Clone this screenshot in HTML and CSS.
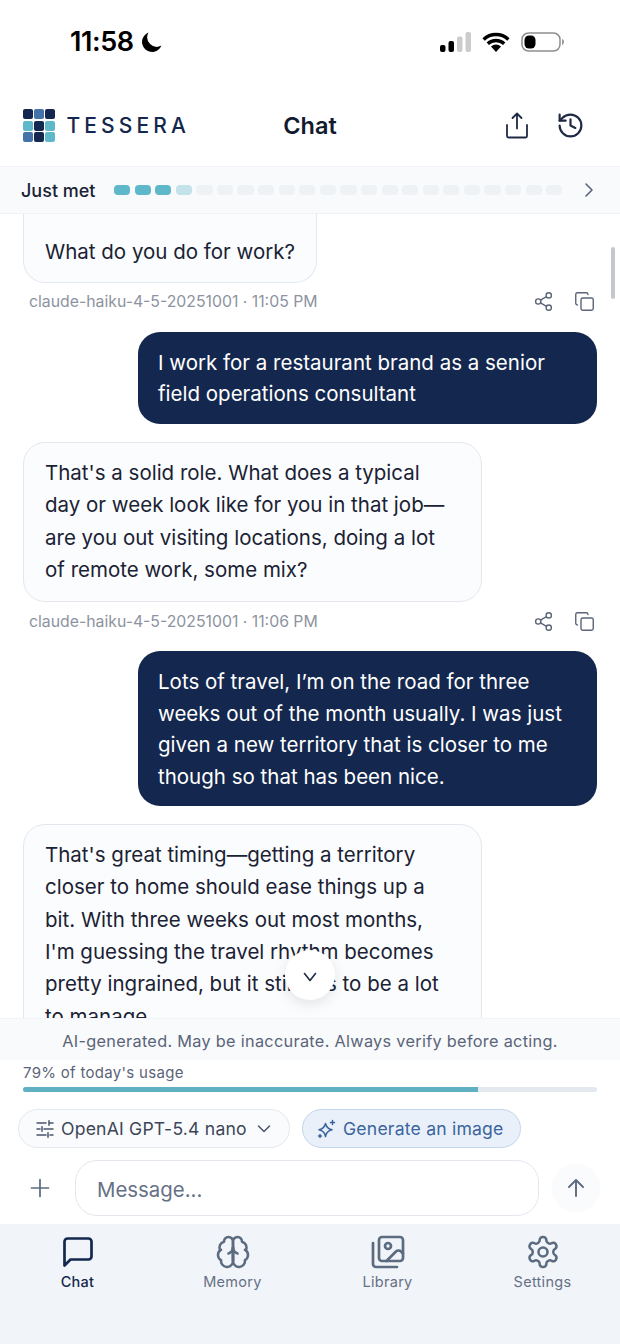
FILE: index.html
```html
<!DOCTYPE html>
<html lang="en">

<head>
    <meta charset="UTF-8">
    <meta name="viewport" content="width=device-width, initial-scale=1.0">
    <title>Chat - Tessera</title>
    <link rel="stylesheet" href="styles.css">
</head>

<body>
    <div class="app">
        <div class="status-bar">
            <div class="status-time">
                <span>11:58</span>
                <svg width="21" height="21" viewBox="0 0 21 21"><path d="M7.500.6a10 10 0 1 0 12.900 12.900A9.500 9.500 0 0 1 7.500.6z" fill="#000"/></svg>
            </div>
            <div class="status-icons">
                <svg width="31" height="20" viewBox="0 0 31 20">
                    <rect x="0" y="13" width="5.500" height="7" rx="2" fill="#000"/>
                    <rect x="8.500" y="9" width="5.500" height="11" rx="2" fill="#000"/>
                    <rect x="17" y="4.500" width="5.500" height="15.500" rx="2" fill="#ccc"/>
                    <rect x="25.500" y="0" width="5.500" height="20" rx="2" fill="#ccc"/>
                </svg>
                <svg width="28" height="20" viewBox="0 0 28 20">
                    <path d="M1.600 7.500a18 18 0 0 1 24.800 0M5.800 11.800a12 12 0 0 1 16.400 0" fill="none" stroke="#000" stroke-width="3.400"/>
                    <path d="M9 14.500a7.500 7.500 0 0 1 10 0L14 20z" fill="#000"/>
                </svg>
                <svg width="44" height="20" viewBox="0 0 44 20">
                    <rect x="1" y="1" width="38" height="18" rx="6.500" fill="none" stroke="#8e8e8e" stroke-width="1.500"/>
                    <rect x="3.500" y="3.500" width="11" height="13" rx="4.500" fill="#000"/>
                    <path d="M41 7c1.500.4 2 1.600 2 3s-.5 2.600-2 3z" fill="#999"/>
                </svg>
            </div>
        </div>

        <header class="top-bar">
            <div class="brand">
                <div class="brand-grid">
                    <span class="navy"></span><span class="blue"></span><span class="navy"></span>
                    <span class="teal"></span><span class="navy"></span><span class="teal"></span>
                    <span class="blue"></span><span class="navy"></span><span class="teal"></span>
                </div>
                <span class="brand-name">TESSERA</span>
            </div>
            <h1 class="page-title">Chat</h1>
            <div class="top-actions">
                <svg width="28" height="28" viewBox="0 0 28 28" fill="none" stroke="#1e2a44" stroke-width="1.800" stroke-linecap="round" stroke-linejoin="round">
                    <path d="M14 16.500V1.500M9.500 6L14 1.500 18.500 6"/>
                    <path d="M4 13v11a1.500 1.500 0 0 0 1.500 1.500h17a1.500 1.500 0 0 0 1.500-1.500V13"/>
                </svg>
                <svg width="29" height="29" viewBox="0 0 24 24" fill="none" stroke="#1e2a44" stroke-width="1.800" stroke-linecap="round" stroke-linejoin="round">
                    <path d="M3 12a9 9 0 1 0 9-9 9.750 9.750 0 0 0-6.740 2.740L3 8"/>
                    <path d="M3 3v5h5"/>
                    <path d="M12 7v5l4 2"/>
                </svg>
            </div>
        </header>

        <div class="rapport">
            <span class="rapport-label">Just met</span>
            <div class="rapport-steps" id="rapportSteps"></div>
            <svg width="12" height="16" viewBox="0 0 12 16" fill="none" stroke="#5b6478" stroke-width="1.600" stroke-linecap="round" stroke-linejoin="round"><path d="M3 2l6 6-6 6"/></svg>
        </div>

        <main class="chat">
            <div class="bubble bot clipped">What do you do for work?</div>
            <div class="meta">
                <span>claude-haiku-4-5-20251001 · 11:05 PM</span>
                <div class="meta-icons">
                    <svg width="21" height="21" viewBox="0 0 24 24" fill="none" stroke="#5b6478" stroke-width="1.600" stroke-linecap="round"><circle cx="18" cy="5" r="3"/><circle cx="6" cy="12" r="3"/><circle cx="18" cy="19" r="3"/><path d="M8.590 13.510l6.830 3.980M15.410 6.510l-6.820 3.980"/></svg>
                    <svg width="21" height="21" viewBox="0 0 24 24" fill="none" stroke="#5b6478" stroke-width="1.600" stroke-linecap="round"><rect x="8" y="8" width="14" height="14" rx="2"/><path d="M4 16c-1.100 0-2-.9-2-2V4c0-1.100.9-2 2-2h10c1.100 0 2 .9 2 2"/></svg>
                </div>
            </div>

            <div class="bubble user">I work for a restaurant brand as a senior field operations consultant</div>

            <div class="bubble bot">That's a solid role. What does a typical day or week look like for you in that job—are you out visiting locations, doing a lot of remote work, some mix?</div>
            <div class="meta">
                <span>claude-haiku-4-5-20251001 · 11:06 PM</span>
                <div class="meta-icons">
                    <svg width="21" height="21" viewBox="0 0 24 24" fill="none" stroke="#5b6478" stroke-width="1.600" stroke-linecap="round"><circle cx="18" cy="5" r="3"/><circle cx="6" cy="12" r="3"/><circle cx="18" cy="19" r="3"/><path d="M8.590 13.510l6.830 3.980M15.410 6.510l-6.820 3.980"/></svg>
                    <svg width="21" height="21" viewBox="0 0 24 24" fill="none" stroke="#5b6478" stroke-width="1.600" stroke-linecap="round"><rect x="8" y="8" width="14" height="14" rx="2"/><path d="M4 16c-1.100 0-2-.9-2-2V4c0-1.100.9-2 2-2h10c1.100 0 2 .9 2 2"/></svg>
                </div>
            </div>

            <div class="bubble user">Lots of travel, I’m on the road for three weeks out of the month usually. I was just given a new territory that is closer to me though so that has been nice.</div>

            <div class="bubble bot">That's great timing—getting a territory closer to home should ease things up a bit. With three weeks out most months, I'm guessing the travel rhythm becomes pretty ingrained, but it still has to be a lot to manage.</div>

            <div class="scroll-thumb"></div>
            <button class="scroll-down">
                <svg width="14" height="10" viewBox="0 0 14 10" fill="none" stroke="#1e2a44" stroke-width="1.600" stroke-linecap="round" stroke-linejoin="round"><path d="M1.500 1.500L7 8.500l5.500-7"/></svg>
            </button>
        </main>

        <div class="disclaimer">AI-generated. May be inaccurate. Always verify before acting.</div>

        <div class="composer">
            <div class="usage-label">79% of today's usage</div>
            <div class="usage-track"><div class="usage-fill"></div></div>

            <div class="pills">
                <div class="pill model">
                    <svg width="20" height="20" viewBox="0 0 20 20" fill="none" stroke="#4b5568" stroke-width="1.500" stroke-linecap="round"><path d="M2 4h9M15 4h3M14 1.800v4.400M2 10h3M9 10h9M7 7.800v4.400M2 16h9M15 16h3M13 13.800v4.400"/></svg>
                    <span>OpenAI GPT-5.4 nano</span>
                    <svg width="14" height="10" viewBox="0 0 14 10" fill="none" stroke="#4b5568" stroke-width="1.500" stroke-linecap="round" stroke-linejoin="round"><path d="M1.500 2l5.500 5.500L12.500 2"/></svg>
                </div>
                <div class="pill generate">
                    <svg width="20" height="20" viewBox="0 0 20 20" fill="none" stroke="#3a659c" stroke-width="1.500" stroke-linejoin="round"><path d="M8.500 4.500c.8 4 2.300 5.500 6.500 6.300-4.200.8-5.700 2.400-6.500 6.700-.8-4.300-2.300-5.900-6.500-6.700 4.200-.8 5.700-2.300 6.500-6.300z"/><path d="M15.500 1.500v4M13.500 3.500h4M3 15.500v3M1.500 17h3" stroke-linecap="round"/></svg>
                    <span>Generate an image</span>
                </div>
            </div>

            <div class="input-row">
                <svg class="plus" width="20" height="20" viewBox="0 0 20 20" fill="none" stroke="#5b6b80" stroke-width="1.700" stroke-linecap="round"><path d="M10 1.500v17M1.500 10h17"/></svg>
                <div class="message-box">Message...</div>
                <div class="send">
                    <svg width="20" height="20" viewBox="0 0 20 20" fill="none" stroke="#5b6b80" stroke-width="1.900" stroke-linecap="round" stroke-linejoin="round"><path d="M10 18V2M3 9l7-7 7 7"/></svg>
                </div>
            </div>
        </div>

        <nav class="tabs">
            <div class="tab active">
                <svg width="36" height="36" viewBox="0 0 24 24" fill="none" stroke="#14274e" stroke-width="1.800" stroke-linejoin="round"><path d="M21 15a2 2 0 0 1-2 2H7l-4 4V5a2 2 0 0 1 2-2h14a2 2 0 0 1 2 2z"/></svg>
                <span>Chat</span>
            </div>
            <div class="tab">
                <svg width="36" height="36" viewBox="0 0 24 24" fill="none" stroke="#5b6b80" stroke-width="1.700" stroke-linecap="round" stroke-linejoin="round">
                    <path d="M12 5a3 3 0 1 0-5.997.125 4 4 0 0 0-2.526 5.770 4 4 0 0 0 .556 6.588A4 4 0 1 0 12 18Z"/>
                    <path d="M12 5a3 3 0 1 1 5.997.125 4 4 0 0 1 2.526 5.770 4 4 0 0 1-.556 6.588A4 4 0 1 1 12 18Z"/>
                    <path d="M15 13a4.500 4.500 0 0 1-3-4 4.500 4.500 0 0 1-3 4"/>
                    <path d="M12 9v9"/>
                    <path d="M3.477 10.896a4 4 0 0 1 .585-.396"/>
                    <path d="M19.938 10.500a4 4 0 0 1 .585.396"/>
                </svg>
                <span>Memory</span>
            </div>
            <div class="tab">
                <svg width="36" height="36" viewBox="0 0 24 24" fill="none" stroke="#5b6b80" stroke-width="1.800" stroke-linecap="round" stroke-linejoin="round">
                    <path d="M18 22H4a2 2 0 0 1-2-2V6"/>
                    <path d="M22 13l-1.296-1.296a2.410 2.410 0 0 0-3.408 0L11 18"/>
                    <circle cx="12" cy="8" r="2"/>
                    <rect x="6" y="2" width="16" height="16" rx="2"/>
                </svg>
                <span>Library</span>
            </div>
            <div class="tab">
                <svg width="36" height="36" viewBox="0 0 24 24" fill="none" stroke="#5b6b80" stroke-width="1.700" stroke-linecap="round" stroke-linejoin="round">
                    <path d="M12.220 2h-.44a2 2 0 0 0-2 2v.18a2 2 0 0 1-1 1.730l-.43.25a2 2 0 0 1-2 0l-.15-.08a2 2 0 0 0-2.730.73l-.22.38a2 2 0 0 0 .73 2.730l.15.1a2 2 0 0 1 1 1.720v.51a2 2 0 0 1-1 1.740l-.15.09a2 2 0 0 0-.73 2.730l.22.38a2 2 0 0 0 2.730.73l.15-.08a2 2 0 0 1 2 0l.43.25a2 2 0 0 1 1 1.730V20a2 2 0 0 0 2 2h.44a2 2 0 0 0 2-2v-.18a2 2 0 0 1 1-1.730l.43-.25a2 2 0 0 1 2 0l.15.08a2 2 0 0 0 2.730-.73l.22-.39a2 2 0 0 0-.73-2.730l-.15-.08a2 2 0 0 1-1-1.740v-.5a2 2 0 0 1 1-1.740l.15-.09a2 2 0 0 0 .73-2.730l-.22-.38a2 2 0 0 0-2.730-.73l-.15.08a2 2 0 0 1-2 0l-.43-.25a2 2 0 0 1-1-1.730V4a2 2 0 0 0-2-2z"/>
                    <circle cx="12" cy="12" r="3"/>
                </svg>
                <span>Settings</span>
            </div>
        </nav>
    </div>

    <script>
        document.addEventListener("DOMContentLoaded", function () {
            const steps = document.getElementById("rapportSteps");
            for (let i = 0; i < 22; i++) {
                const step = document.createElement("span");
                if (i < 3) {
                    step.className = "on";
                } else if (i === 3) {
                    step.className = "half";
                }
                steps.appendChild(step);
            }
        });
    </script>
</body>

</html>
```

FILE: styles.css
```css
* {
    box-sizing: border-box;
}

body {
    font-family: 'Inter', 'Liberation Sans', sans-serif;
    margin: 0;
    padding: 0;
    background-color: #fff;
    color: #1a2233;
}

.app {
    width: 620px;
    height: 1344px;
    display: flex;
    flex-direction: column;
    overflow: hidden;
}

/* status bar */
.status-bar {
    height: 100px;
    flex: none;
    display: flex;
    justify-content: space-between;
    align-items: flex-start;
    padding: 28px 55px 0 70px;
}

.status-time {
    display: flex;
    align-items: center;
    gap: 7px;
    font-size: 27px;
    font-weight: 600;
    line-height: 28px;
    letter-spacing: -0.4px;
    color: #000;
}

.status-icons {
    display: flex;
    align-items: center;
    gap: 11px;
    padding-top: 4px;
}

/* header */
.top-bar {
    height: 66px;
    flex: none;
    display: flex;
    align-items: center;
    justify-content: space-between;
    padding: 0 35px 15px 23px;
    position: relative;
}

.brand {
    display: flex;
    align-items: center;
    gap: 12px;
}

.brand-grid {
    display: grid;
    grid-template-columns: repeat(3, 9.500px);
    grid-auto-rows: 10px;
    gap: 1.500px 1.500px;
}

.brand-grid span {
    border-radius: 2px;
}

.navy {
    background-color: #14274e;
}

.blue {
    background-color: #4473aa;
}

.teal {
    background-color: #5fb8c9;
}

.brand-name {
    font-size: 21px;
    font-weight: 500;
    letter-spacing: 4.100px;
    color: #14274e;
}

.page-title {
    position: absolute;
    left: 0;
    right: 0;
    top: 9px;
    margin: 0;
    text-align: center;
    font-size: 23.500px;
    font-weight: 600;
    line-height: 34px;
    color: #111a2e;
    pointer-events: none;
}

.top-actions {
    display: flex;
    align-items: center;
    gap: 25px;
}

/* rapport strip */
.rapport {
    height: 48px;
    flex: none;
    display: flex;
    align-items: center;
    padding: 0 25px 0 21px;
    background-color: #f8fafc;
    border-top: 1px solid #f1f4f8;
    border-bottom: 1px solid #eef1f5;
}

.rapport-label {
    font-size: 18px;
    font-weight: 500;
    color: #1a2233;
    width: 93px;
    flex: none;
}

.rapport-steps {
    display: flex;
    gap: 4.400px;
    flex: 1;
}

.rapport-steps span {
    width: 16.200px;
    height: 10px;
    border-radius: 4px;
    background-color: #eff2f5;
}

.rapport-steps .on {
    background-color: #5fb8c9;
}

.rapport-steps .half {
    background-color: #c3e2e9;
}

/* chat */
.chat {
    flex: 1;
    min-height: 0;
    position: relative;
    overflow: hidden;
    display: flex;
    flex-direction: column;
    align-items: flex-start;
    padding: 0 23px;
}

.bubble {
    font-size: 20.500px;
    line-height: 31.500px;
    flex: none;
}

.bubble.bot {
    width: 459px;
    padding: 14px 32px 15px 21px;
    line-height: 32.300px;
    background-color: #fbfcfe;
    border: 1px solid #e4e8ee;
    border-radius: 22px;
    color: #1a2233;
    margin-top: 18px;
}

.bubble.bot.clipped {
    width: 294px;
    margin-top: 0;
    padding: 22px 21px 13.700px;
    border-top: none;
    border-radius: 0 0 22px 22px;
    white-space: nowrap;
}

.bubble.user {
    align-self: flex-end;
    width: 459px;
    margin-top: 11px;
    padding: 15px 20px 14px;
    background-color: #14274e;
    color: #fff;
    border-radius: 22px;
}

.meta {
    width: 100%;
    height: 38px;
    flex: none;
    display: flex;
    justify-content: space-between;
    align-items: center;
    padding-left: 6px;
    font-size: 15.800px;
    color: #8d93a0;
}

.meta-icons {
    display: flex;
    gap: 20.500px;
    padding-right: 2px;
}

.scroll-thumb {
    position: absolute;
    right: 5px;
    top: 33px;
    width: 4px;
    height: 52px;
    border-radius: 2px;
    background-color: #c4c8ce;
}

.scroll-down {
    position: absolute;
    left: 285px;
    top: 736px;
    width: 50px;
    height: 50px;
    border: none;
    border-radius: 50%;
    background-color: #fff;
    box-shadow: 0 4px 14px rgba(0, 0, 0, 0.1);
    display: flex;
    align-items: center;
    justify-content: center;
    padding: 4px 0 0;
}

/* bottom */
.disclaimer {
    height: 42px;
    flex: none;
    display: flex;
    align-items: center;
    justify-content: center;
    padding-top: 2px;
    background-color: #f8fafc;
    border-top: 1px solid #f0f3f7;
    font-size: 16.300px;
    letter-spacing: 0.3px;
    color: #5b6478;
}

.composer {
    flex: none;
    height: 164px;
    padding: 3px 23px 0;
    position: relative;
}

.usage-label {
    font-size: 15px;
    letter-spacing: 0.3px;
    line-height: 20px;
    color: #5b6478;
}

.usage-track {
    height: 5px;
    margin-top: 4px;
    border-radius: 3px;
    background-color: #e4e9f0;
    overflow: hidden;
}

.usage-fill {
    width: 79.200%;
    height: 100%;
    background-color: #5fb0c2;
}

.pills {
    display: flex;
    gap: 12px;
    margin: 17px 0 0 -5px;
}

.pill {
    height: 39px;
    display: flex;
    align-items: center;
    border-radius: 20px;
    font-size: 17.600px;
    letter-spacing: 0.2px;
}

.pill.model {
    width: 272px;
    gap: 6px;
    padding-left: 16px;
    background-color: #fafbfd;
    border: 1px solid #e4e8ee;
    color: #3d4658;
}

.pill.model svg:last-child {
    margin-left: 4px;
}

.pill.generate {
    width: 219px;
    gap: 6px;
    padding-left: 14px;
    background-color: #eaf0fa;
    border: 1px solid #c3d5ec;
    color: #3a659c;
}

.input-row {
    display: flex;
    align-items: center;
    margin: 12px 0 0 -23px;
    width: 620px;
}

.plus {
    margin-left: 30px;
    flex: none;
}

.message-box {
    width: 464px;
    height: 56px;
    margin-left: 25px;
    padding: 3px 0 0 21px;
    display: flex;
    align-items: center;
    background-color: #fff;
    border: 1px solid #e4e8ee;
    border-radius: 22px;
    font-size: 20.400px;
    color: #667085;
}

.send {
    width: 48px;
    height: 48px;
    margin-left: 13px;
    border-radius: 50%;
    background-color: #fafbfc;
    display: flex;
    align-items: center;
    justify-content: center;
}

.tabs {
    height: 120px;
    flex: none;
    display: flex;
    justify-content: space-around;
    padding: 10px 0 0;
    background-color: #f1f5f9;
}

.tab {
    width: 155px;
    display: flex;
    flex-direction: column;
    align-items: center;
    gap: 2px;
    font-size: 14.500px;
    letter-spacing: 0.3px;
    line-height: 20px;
    font-weight: 400;
    color: #667085;
}

.tab.active {
    color: #14274e;
    font-weight: 500;
}
```
